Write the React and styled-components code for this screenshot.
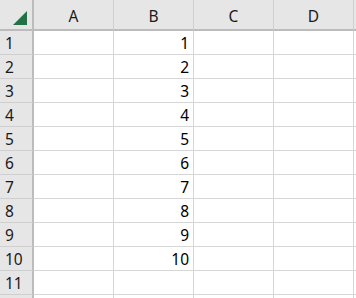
import React from "react";
import styled, { createGlobalStyle } from "styled-components";

const Global = createGlobalStyle`
  html, body { margin: 0; padding: 0; background: #fff; overflow: hidden; }
  body { font-family: "Noto Sans", "Open Sans", sans-serif; }
`;

const Sheet = styled.div`
  display: grid;
  grid-template-columns: 34px repeat(5, 80px);
  grid-auto-rows: 24px;
  grid-template-rows: 31px;
  width: 356px;
  height: 298px;
  overflow: hidden;
`;

const Corner = styled.div`
  background: #e6e6e6;
  border-right: 2px solid #bcbcbc;
  border-bottom: 2px solid #bcbcbc;
  box-sizing: border-box;
  display: flex;
  align-items: flex-end;
  justify-content: flex-end;
  padding: 0 5px 4px 0;
`;

const ColHead = styled.div`
  background: #e6e6e6;
  border-right: 1px solid #cfcfcf;
  border-bottom: 2px solid #bcbcbc;
  box-sizing: border-box;
  display: flex;
  align-items: center;
  justify-content: center;
  font-size: 15.5px;
  color: #1a1a1a;
  padding-top: 2px;
`;

const RowHead = styled.div`
  background: #e6e6e6;
  border-right: 2px solid #bcbcbc;
  border-bottom: 1px solid #cfcfcf;
  box-sizing: border-box;
  display: flex;
  align-items: center;
  padding-left: 5px;
  font-size: 15.5px;
  color: #1a1a1a;
`;

const Cell = styled.div`
  border-right: 1px solid #d6d6d6;
  border-bottom: 1px solid #d6d6d6;
  box-sizing: border-box;
  display: flex;
  align-items: center;
  justify-content: ${(p) => (p.$num ? "flex-end" : "flex-start")};
  padding-right: 4px;
  font-size: 15.5px;
  color: #000;
`;

const cols = ["A", "B", "C", "D", ""];
const rows = Array.from({ length: 12 }, (_, i) => i + 1);

export default function App() {
  return (
    <>
      <Global />
      <Sheet>
        <Corner>
          <svg width="14" height="14" viewBox="0 0 14 14">
            <polygon points="14,0 14,14 0,14" fill="#217346" />
          </svg>
        </Corner>
        {cols.map((c, i) => (
          <ColHead key={i}>{c}</ColHead>
        ))}
        {rows.map((r) => (
          <React.Fragment key={r}>
            <RowHead>{r <= 11 ? r : ""}</RowHead>
            {cols.map((c, i) => (
              <Cell key={i} $num={c === "B"}>
                {c === "B" && r <= 10 ? r : ""}
              </Cell>
            ))}
          </React.Fragment>
        ))}
      </Sheet>
    </>
  );
}
